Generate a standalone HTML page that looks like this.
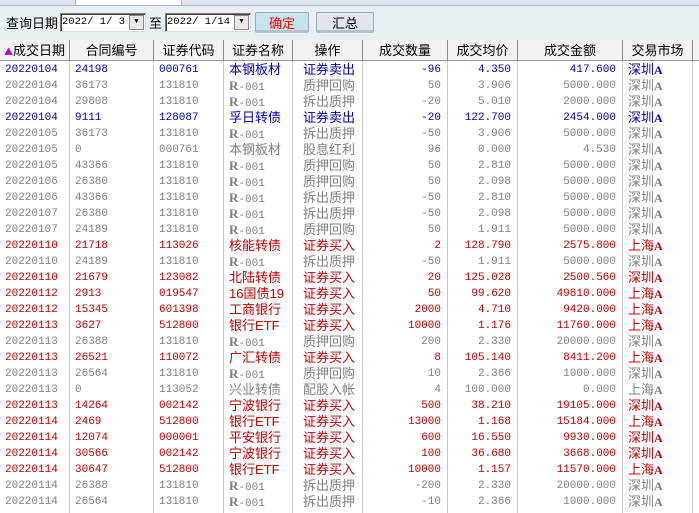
<!DOCTYPE html><html><head><meta charset="utf-8"><style>
*{margin:0;padding:0;box-sizing:border-box}
body{width:699px;height:513px;overflow:hidden;background:#fff;font-family:"Liberation Sans","Noto Sans CJK SC",sans-serif;position:relative}
.top{position:absolute;left:0;top:0;width:699px;height:40px;background:#e9f0f4}
.strip{position:absolute;left:0;top:0;width:699px;height:6px;background:#dde6ee;border-bottom:1px solid #a8b8cc}
.tab{position:absolute;left:75px;top:0;width:107px;height:6px;background:#fff;border:1px solid #a8b8cc;border-top:none}
.lbl{position:absolute;top:14px;font-size:13px;color:#000;font-family:"Noto Sans CJK SC",sans-serif;line-height:18px}
.dt{position:absolute;top:13px;height:19px;border:1px solid #7a7a7a;border-right-color:#ddd;border-bottom-color:#ddd;background:#fff;font-family:"Liberation Mono",monospace;font-size:10.5px;line-height:17px;padding-left:1px;box-shadow:inset 1px 1px 0 #404040;overflow:hidden;white-space:pre}
.dd{position:absolute;right:1px;top:1px;width:15px;height:15px;background:#e8e8e8;border:1px solid #888;font-size:7px;text-align:center;line-height:13px}
.btn{position:absolute;top:12px;height:21px;border:1px solid #a0a8b0;border-radius:2px;font-family:"Noto Sans CJK SC",sans-serif;font-size:13px;text-align:center;line-height:19px;border-bottom:3px solid #b8c0c8}
.hdr{position:absolute;top:40px;height:21px;background:#f2f2f2;border-bottom:1px solid #999;border-right:1px solid #888;font-family:"Noto Sans CJK SC",sans-serif;font-size:13px;text-align:center;line-height:20px;color:#000}
.vl{position:absolute;top:61px;bottom:0;width:1px;background:#c8c8c8}
.r{position:absolute;left:0;height:16px;width:699px;font-size:11.5px;line-height:16px;white-space:nowrap}
.r>span{position:absolute;top:0}
.n{font-family:"Liberation Mono",monospace;font-size:11px}
.c{font-family:"Liberation Sans","Noto Sans CJK SC",sans-serif;font-size:13px}
.rr{font-family:"Liberation Serif",serif;font-weight:bold;font-size:13px}
.b{color:#0000b0}.d{color:#c00000}.g{color:#808080}
</style></head><body>
<div class="top"></div><div class="strip"></div><div class="tab"></div>
<div class="lbl" style="left:6px">查询日期</div>
<div class="dt" style="left:60px;width:86px">2022/ 1/ 3<div class="dd">▼</div></div>
<div class="lbl" style="left:149px">至</div>
<div class="dt" style="left:165px;width:86px">2022/ 1/14<div class="dd">▼</div></div>
<div class="btn" style="left:255px;width:54px;color:#f00;background:#c4e4f0">确定</div>
<div class="btn" style="left:316px;width:58px;color:#000;background:#e0e6ec">汇总</div>
<div class="hdr" style="left:0;width:70px"><span style="color:#c000c0;font-size:9px">▲</span>成交日期</div>
<div class="hdr" style="left:70px;width:84px">合同编号</div>
<div class="hdr" style="left:154px;width:70px">证券代码</div>
<div class="hdr" style="left:224px;width:69px">证券名称</div>
<div class="hdr" style="left:293px;width:70px">操作</div>
<div class="hdr" style="left:363px;width:85px">成交数量</div>
<div class="hdr" style="left:448px;width:70px">成交均价</div>
<div class="hdr" style="left:518px;width:105px">成交金额</div>
<div class="hdr" style="left:623px;width:70px">交易市场</div>
<div class="hdr" style="left:693px;width:6px;border-right:none"></div>
<div class="vl" style="left:69px"></div><div class="vl" style="left:153px"></div><div class="vl" style="left:223px"></div><div class="vl" style="left:292px"></div><div class="vl" style="left:362px"></div><div class="vl" style="left:447px"></div><div class="vl" style="left:517px"></div><div class="vl" style="left:622px"></div><div class="vl" style="left:692px"></div>
<div id="rows"></div>
<script>
var d=[
["b","20220104","24198","000761","本钢板材","证券卖出","-96","4.350","417.600","深圳A"],
["g","20220104","36173","131810","R-001","质押回购","50","3.906","5000.000","深圳A"],
["g","20220104","29808","131810","R-001","拆出质押","-20","5.010","2000.000","深圳A"],
["b","20220104","9111","128087","孚日转债","证券卖出","-20","122.700","2454.000","深圳A"],
["g","20220105","36173","131810","R-001","拆出质押","-50","3.906","5000.000","深圳A"],
["g","20220105","0","000761","本钢板材","股息红利","96","0.000","4.530","深圳A"],
["g","20220105","43366","131810","R-001","质押回购","50","2.810","5000.000","深圳A"],
["g","20220106","26380","131810","R-001","质押回购","50","2.098","5000.000","深圳A"],
["g","20220106","43366","131810","R-001","拆出质押","-50","2.810","5000.000","深圳A"],
["g","20220107","26380","131810","R-001","拆出质押","-50","2.098","5000.000","深圳A"],
["g","20220107","24189","131810","R-001","质押回购","50","1.911","5000.000","深圳A"],
["d","20220110","21718","113026","核能转债","证券买入","2","128.790","2575.800","上海A"],
["g","20220110","24189","131810","R-001","拆出质押","-50","1.911","5000.000","深圳A"],
["d","20220110","21679","123082","北陆转债","证券买入","20","125.028","2500.560","深圳A"],
["d","20220112","2913","019547","16国债19","证券买入","50","99.620","49810.000","上海A"],
["d","20220112","15345","601398","工商银行","证券买入","2000","4.710","9420.000","上海A"],
["d","20220113","3627","512800","银行ETF","证券买入","10000","1.176","11760.000","上海A"],
["g","20220113","26388","131810","R-001","质押回购","200","2.330","20000.000","深圳A"],
["d","20220113","26521","110072","广汇转债","证券买入","8","105.140","8411.200","上海A"],
["g","20220113","26564","131810","R-001","质押回购","10","2.366","1000.000","深圳A"],
["g","20220113","0","113052","兴业转债","配股入帐","4","100.000","0.000","上海A"],
["d","20220113","14264","002142","宁波银行","证券买入","500","38.210","19105.000","深圳A"],
["d","20220114","2469","512800","银行ETF","证券买入","13000","1.168","15184.000","上海A"],
["d","20220114","12074","000001","平安银行","证券买入","600","16.550","9930.000","深圳A"],
["d","20220114","30566","002142","宁波银行","证券买入","100","36.680","3668.000","深圳A"],
["d","20220114","30647","512800","银行ETF","证券买入","10000","1.157","11570.000","上海A"],
["g","20220114","26388","131810","R-001","拆出质押","-200","2.330","20000.000","深圳A"],
["g","20220114","26564","131810","R-001","拆出质押","-10","2.366","1000.000","深圳A"]];
var h="";
d.forEach(function(r,i){
var nm=r[4]=="R-001"?'<span class="rr">R</span><span class="n">-001</span>':r[4];
h+='<div class="r '+r[0]+'" style="top:'+(62+i*16)+'px">'+
'<span class="n" style="left:5px">'+r[1]+'</span>'+
'<span class="n" style="left:75px">'+r[2]+'</span>'+
'<span class="n" style="left:159px">'+r[3]+'</span>'+
'<span class="c" style="left:229px">'+nm+'</span>'+
'<span class="c" style="left:303px">'+r[5]+'</span>'+
'<span class="n" style="right:'+(699-441)+'px">'+r[6]+'</span>'+
'<span class="n" style="right:'+(699-511)+'px">'+r[7]+'</span>'+
'<span class="n" style="right:'+(699-616)+'px">'+r[8]+'</span>'+
'<span class="c" style="left:628px">'+r[9].slice(0,2)+'<span class="rr" style="font-size:12px">A</span></span></div>';});
document.getElementById("rows").innerHTML=h;
</script>
</body></html>
